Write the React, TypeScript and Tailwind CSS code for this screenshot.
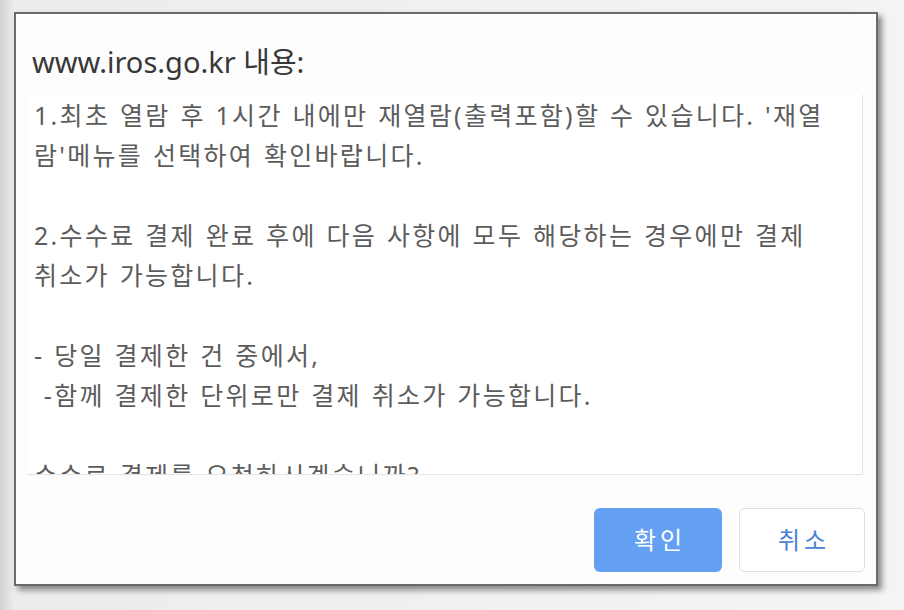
import React from 'react'

const lines = [
  "1.최초 열람 후 1시간 내에만 재열람(출력포함)할 수 있습니다. '재열",
  "람'메뉴를 선택하여 확인바랍니다.",
  '',
  '2.수수료 결제 완료 후에 다음 사항에 모두 해당하는 경우에만 결제',
  '취소가 가능합니다.',
  '',
  '- 당일 결제한 건 중에서,',
  ' -함께 결제한 단위로만 결제 취소가 가능합니다.',
  '',
  '수수료 결제를 요청하시겠습니까?',
]

const font = { fontFamily: '"Noto Sans", "Noto Sans CJK KR", sans-serif' }

export default function App() {
  return (
    <div
      className="flex h-[610px] w-[904px] items-start bg-[linear-gradient(to_right,#d2d2d2,#ececec_14px,#f4f4f4)] pl-[14px] pt-[12px]"
      style={font}
    >
      <div className="flex h-[574px] w-[864px] flex-col border-2 border-[#6a6a6a] bg-[#fdfdfd] shadow-[4px_4px_6px_rgba(0,0,0,0.45)]">
        <div className="mt-[32px] h-[32px] pl-[16px] text-[29px] leading-[32px] text-[#383838]">
          www.iros.go.kr 내용:
        </div>

        <div className="ml-[11px] mt-[17px] h-[380px] w-[836px] overflow-hidden border-b border-r border-[#e4e4e4] bg-white pl-[7px]">
          {lines.map((line, i) => (
            <div
              key={i}
              className="h-[40px] whitespace-pre text-[25px] leading-[40px] tracking-[2.3px] text-[#5c5c5c] [word-spacing:1px]"
            >
              {line}
            </div>
          ))}
        </div>

        <div className="mr-[11px] mt-[33px] flex justify-end gap-[17px]">
          <button
            type="button"
            className="h-[64px] w-[128px] rounded-[6px] bg-[#64a0f2] pl-[4px] text-[24px] tracking-[4px] text-white"
          >
            확인
          </button>
          <button
            type="button"
            className="h-[64px] w-[126px] rounded-[6px] border border-[#e0e0e0] bg-white pl-[4px] text-[24px] tracking-[4px] text-[#4c82d6]"
          >
            취소
          </button>
        </div>
      </div>
    </div>
  )
}
